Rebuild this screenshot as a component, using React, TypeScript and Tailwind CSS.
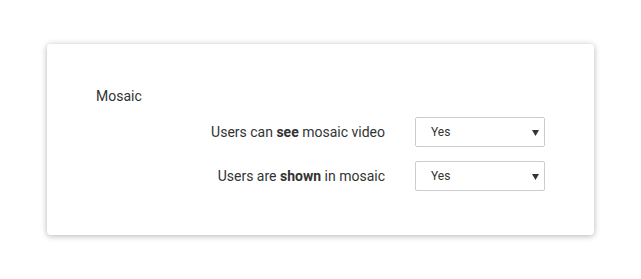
const Row = ({ children }: { children: React.ReactNode }) => (
  <div className="flex items-center justify-end gap-[30px]">
    <span className="text-[14px] text-[#333]">{children}</span>
    <div className="relative flex h-[30px] w-[130px] items-center rounded-[2px] border border-[#ccc] bg-white pl-[15px]">
      <span className="text-[12px] text-[#333]">Yes</span>
      <svg className="absolute right-[5px] top-[12px]" width="7" height="6" viewBox="0 0 7 6">
        <path d="M0 0h7L3.5 6z" fill="#333" />
      </svg>
    </div>
  </div>
);

export default function App() {
  return (
    <div className="h-[279px] w-[641px] bg-white pl-[47px] pt-[44px]" style={{ fontFamily: "Roboto, sans-serif" }}>
      <div className="h-[191px] w-[547px] rounded-[4px] bg-white pl-[49px] pr-[49px] pt-[42px] shadow-[0_1px_6px_rgba(0,0,0,0.3)]">
        <div className="text-[14px] leading-[20px] text-[#333]">Mosaic</div>
        <div className="mt-[11px] flex flex-col gap-[14px]">
          <Row>
            Users can <b>see</b> mosaic video
          </Row>
          <Row>
            Users are <b>shown</b> in mosaic
          </Row>
        </div>
      </div>
    </div>
  );
}
